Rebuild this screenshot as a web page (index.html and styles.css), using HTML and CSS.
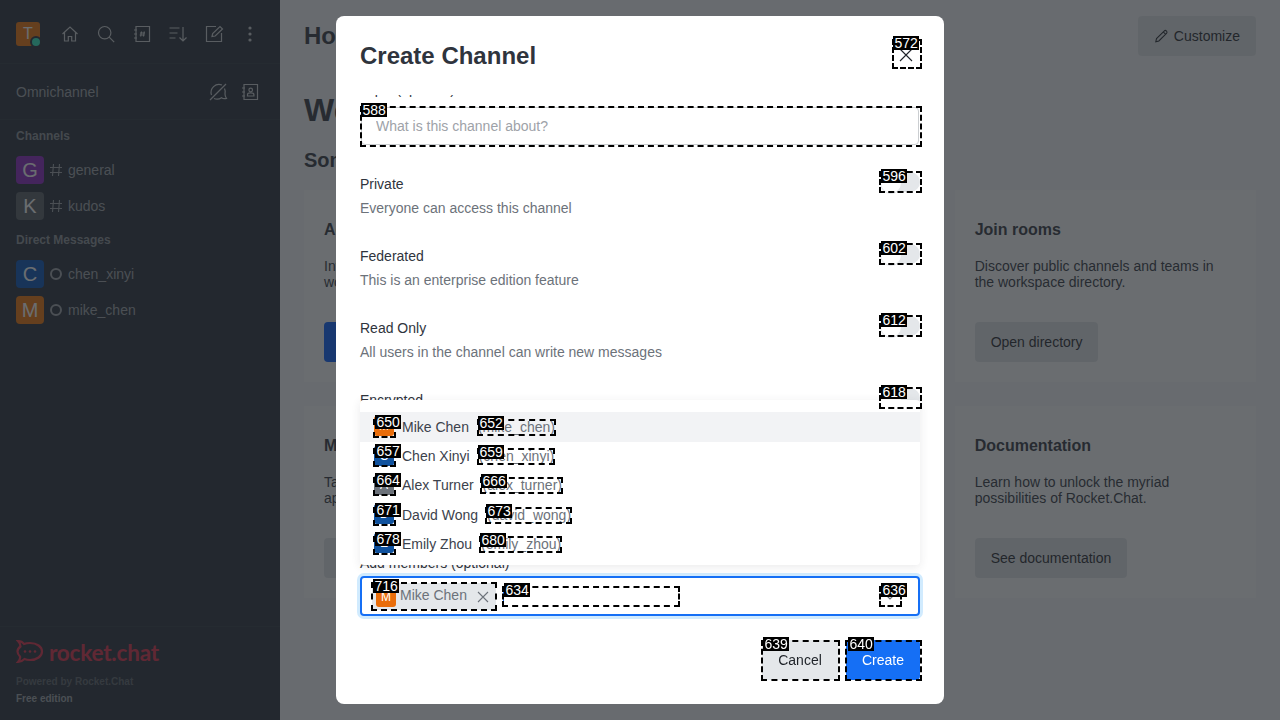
FILE: index.html
```html
<!DOCTYPE html>
<html lang="en">
<head>
    <meta charset="UTF-8">
    <meta name="viewport" content="width=device-width, initial-scale=1.0">
    <title>Create Channel</title>
    <link rel="stylesheet" href="styles.css">
</head>
<body>
    <div class="app">
        <aside class="sidebar">
            <div class="toolbar">
                <div class="user-avatar">T<span class="status-dot"></span></div>
                <svg class="icon" viewBox="0 0 20 20"><path d="M2.5 10 10 3l7.5 7M4.5 8.5V17h3.8v-4.5h3.4V17h3.8V8.5"/></svg>
                <svg class="icon" viewBox="0 0 20 20"><circle cx="8.7" cy="8.7" r="6.2"/><path d="m13.2 13.2 5 5"/></svg>
                <svg class="icon" viewBox="0 0 20 20"><path d="M4 2.5h13.500v15H4zM2 6h3M2 10h3M2 14h3M9.500 7.500 8.700 12.500M12.300 7.500l-.8 5M8 9h5M7.700 11h5"/></svg>
                <svg class="icon" viewBox="0 0 20 20"><path d="M1.500 4h10M1.500 9h8M1.500 14h6M15 3v14M11.500 13.500 15 17l3.500-3.500"/></svg>
                <svg class="icon" viewBox="0 0 20 20"><path d="M17.500 9v8.500h-15v-15H12M8 12.500l.7-3 7.300-7 2.500 2.500-7.300 7z"/></svg>
                <svg class="icon icon-fill" viewBox="0 0 20 20"><circle cx="10" cy="4" r="1.600"/><circle cx="10" cy="10" r="1.600"/><circle cx="10" cy="16" r="1.600"/></svg>
            </div>
            <div class="omni-row">
                <span class="omni-title">Omnichannel</span>
                <svg class="icon" viewBox="0 0 20 20"><path d="M2 18 18 2M3.500 13A8 8 0 0 1 14 3M16.500 6.500A8 8 0 0 1 17 12c0 2 .8 3.500 1.500 4.500-2.500.5-4 0-5-.8A8 8 0 0 1 6 16.500"/></svg>
                <svg class="icon" viewBox="0 0 20 20"><path d="M4 2.500h13.500v15H4zM2 6h3M2 10h3M2 14h3"/><circle cx="10.700" cy="8" r="1.800"/><path d="M7.500 14v-1.500c0-1 1-1.700 3.200-1.700s3.200.7 3.200 1.700V14z"/></svg>
            </div>
            <div class="room-list">
                <h4 class="group-title">Channels</h4>
                <div class="room">
                    <span class="avatar purple">G</span>
                    <svg class="room-icon" viewBox="0 0 14 14"><path d="M4.500 1 3.500 13M10.500 1l-1 12M1 4.500h12M1 9.500h12"/></svg>
                    <span class="room-name">general</span>
                </div>
                <div class="room">
                    <span class="avatar grey">K</span>
                    <svg class="room-icon" viewBox="0 0 14 14"><path d="M4.500 1 3.500 13M10.500 1l-1 12M1 4.500h12M1 9.500h12"/></svg>
                    <span class="room-name">kudos</span>
                </div>
                <h4 class="group-title">Direct Messages</h4>
                <div class="room">
                    <span class="avatar blue">C</span>
                    <span class="presence"></span>
                    <span class="room-name">chen_xinyi</span>
                </div>
                <div class="room">
                    <span class="avatar orange">M</span>
                    <span class="presence"></span>
                    <span class="room-name">mike_chen</span>
                </div>
            </div>
            <div class="side-footer">
                <div class="logo">
                    <svg class="logo-mark" viewBox="0 0 28 26"><path d="M2 2c3 0 5 1.500 6 3 2-.8 4-1 6-1 7 0 12 3.800 12 8.500S21 21 14 21c-2 0-4-.3-5.500-1-1.500 1.500-3.500 3-6.500 3 1.500-1.500 2.500-3.200 2-5.500C2.500 16 1.500 14.300 1.500 12.500S2.500 9 4.500 7.500C4.500 5.500 3.500 3.500 2 2z"/><circle cx="9" cy="12.500" r="1.300"/><circle cx="14" cy="12.500" r="1.300"/><circle cx="19" cy="12.500" r="1.300"/></svg>
                    <span class="logo-text">rocket.chat</span>
                </div>
                <p class="powered">Powered by Rocket.Chat</p>
                <p class="edition">Free edition</p>
            </div>
        </aside>

        <main class="main">
            <header class="main-header">
                <h2 class="main-title">Home</h2>
                <button class="btn btn-light">
                    <svg class="btn-icon" viewBox="0 0 16 16"><path d="M1.500 14.500l.8-3.500 8.700-8.700a1.900 1.900 0 0 1 2.700 2.700L5 13.700zM10 3.300 12.700 6"/></svg>
                    Customize
                </button>
            </header>
            <div class="main-body">
                <h1 class="welcome">Welcome to Rocket.Chat</h1>
                <h3 class="ideas">Some ideas to get you started</h3>
                <div class="cards">
                    <section class="card">
                        <h4>Add users</h4>
                        <p>Invite team members to your own online workspace.</p>
                        <button class="btn btn-primary">Add users</button>
                    </section>
                    <section class="card">
                        <h4>Create channels</h4>
                        <p>Create a channel to organize conversations by topic or team.</p>
                        <button class="btn btn-light">Create channel</button>
                    </section>
                    <section class="card">
                        <h4>Join rooms</h4>
                        <p>Discover public channels and teams in the workspace directory.</p>
                        <button class="btn btn-light">Open directory</button>
                    </section>
                    <section class="card">
                        <h4>Mobile apps</h4>
                        <p>Take Rocket.Chat with you with mobile applications.</p>
                        <button class="btn btn-light">Google Play</button>
                    </section>
                    <section class="card">
                        <h4>Desktop apps</h4>
                        <p>Install Rocket.Chat on your Windows, Linux or Mac computer.</p>
                        <button class="btn btn-light">Windows</button>
                    </section>
                    <section class="card">
                        <h4>Documentation</h4>
                        <p>Learn how to unlock the myriad possibilities of Rocket.Chat.</p>
                        <button class="btn btn-light">See documentation</button>
                    </section>
                </div>
            </div>
        </main>
    </div>

    <div class="backdrop"></div>

    <div class="modal">
        <header class="modal-header">
            <h2>Create Channel</h2>
            <svg class="close-icon" viewBox="0 0 16 16"><path d="M2 2l12 12M14 2 2 14"/></svg>
        </header>
        <div class="modal-body">
            <form class="form">
                <label class="field-label">Topic (optional)</label>
                <input class="text-input" type="text" placeholder="What is this channel about?">

                <div class="toggle-row">
                    <div>
                        <div class="toggle-name">Private</div>
                        <div class="toggle-hint">Everyone can access this channel</div>
                    </div>
                    <span class="toggle"></span>
                </div>
                <div class="toggle-row">
                    <div>
                        <div class="toggle-name">Federated</div>
                        <div class="toggle-hint">This is an enterprise edition feature</div>
                    </div>
                    <span class="toggle"></span>
                </div>
                <div class="toggle-row">
                    <div>
                        <div class="toggle-name">Read Only</div>
                        <div class="toggle-hint">All users in the channel can write new messages</div>
                    </div>
                    <span class="toggle"></span>
                </div>
                <div class="toggle-row">
                    <div>
                        <div class="toggle-name">Encrypted</div>
                        <div class="toggle-hint">End to end encrypted channel</div>
                    </div>
                    <span class="toggle"></span>
                </div>
                <div class="toggle-row">
                    <div>
                        <div class="toggle-name">Broadcast</div>
                        <div class="toggle-hint">Only authorized users can write</div>
                    </div>
                    <span class="toggle"></span>
                </div>

                <label class="field-label members-label">Add members (optional)</label>
                <div class="member-input">
                    <span class="chip">
                        <span class="mini-avatar orange-bright">M</span>
                        <span class="chip-name">Mike Chen</span>
                        <svg class="chip-close" viewBox="0 0 12 12"><path d="M1 1l10 10M11 1 1 11"/></svg>
                    </span>
                    <span class="caret"></span>
                    <svg class="chevron" viewBox="0 0 16 16"><path d="M3 6l5 5 5-5"/></svg>
                </div>
            </form>
        </div>
        <footer class="modal-footer">
            <button class="btn btn-cancel">Cancel</button>
            <button class="btn btn-create">Create</button>
        </footer>

        <ul class="options">
            <li class="option option-active"><span class="mini-avatar orange-bright">M</span><span class="option-name">Mike Chen</span><span class="option-user">(mike_chen)</span></li>
            <li class="option"><span class="mini-avatar blue-bright">C</span><span class="option-name">Chen Xinyi</span><span class="option-user">(chen_xinyi)</span></li>
            <li class="option"><span class="mini-avatar grey-bright">A</span><span class="option-name">Alex Turner</span><span class="option-user">(alex_turner)</span></li>
            <li class="option"><span class="mini-avatar blue-bright">D</span><span class="option-name">David Wong</span><span class="option-user">(david_wong)</span></li>
            <li class="option"><span class="mini-avatar blue-bright">E</span><span class="option-name">Emily Zhou</span><span class="option-user">(emily_zhou)</span></li>
        </ul>
    </div>

    <!-- numbered element markers drawn over the page -->
    <div class="marks">
        <div class="mark m572"><span>572</span></div>
        <div class="mark m588"><span>588</span></div>
        <div class="mark mark-toggle m596"><span>596</span></div>
        <div class="mark mark-toggle m602"><span>602</span></div>
        <div class="mark mark-toggle m612"><span>612</span></div>
        <div class="mark mark-toggle m618"><span>618</span></div>
        <div class="mark mark-avatar m650"><span>650</span></div>
        <div class="mark mark-user m652"><span>652</span></div>
        <div class="mark mark-avatar m657"><span>657</span></div>
        <div class="mark mark-user m659"><span>659</span></div>
        <div class="mark mark-avatar m664"><span>664</span></div>
        <div class="mark mark-user m666"><span>666</span></div>
        <div class="mark mark-avatar m671"><span>671</span></div>
        <div class="mark mark-user m673"><span>673</span></div>
        <div class="mark mark-avatar m678"><span>678</span></div>
        <div class="mark mark-user m680"><span>680</span></div>
        <div class="mark m716"><span>716</span></div>
        <div class="mark m634"><span>634</span></div>
        <div class="mark m636"><span>636</span></div>
        <div class="mark m639"><span>639</span></div>
        <div class="mark m640"><span>640</span></div>
    </div>
</body>
</html>
```

FILE: styles.css
```css
* {
    box-sizing: border-box;
}

html, body {
    height: 100%;
}

body {
    margin: 0;
    font-family: "Liberation Sans", Arial, sans-serif;
    font-size: 14px;
    color: #2f343d;
    overflow: hidden;
}

h1, h2, h3, h4, p, ul {
    margin: 0;
    padding: 0;
}

.app {
    display: flex;
    height: 720px;
}

/* Sidebar */
.sidebar {
    width: 280px;
    flex-shrink: 0;
    display: flex;
    flex-direction: column;
    background-color: #232a35;
    color: #9ea2a8;
}

.toolbar {
    height: 64px;
    padding: 5px 16px 0;
    display: flex;
    align-items: center;
    border-bottom: 1px solid #2b323d;
}

.icon {
    width: 20px;
    height: 20px;
    fill: none;
    stroke: #cbced1;
    stroke-width: 1.2;
    margin-left: 16px;
}

.toolbar .user-avatar + .icon {
    margin-left: 20px;
}

.icon-fill {
    fill: #cbced1;
    stroke: none;
}

.user-avatar {
    position: relative;
    width: 24px;
    height: 24px;
    border-radius: 3px;
    background-color: #f07000;
    color: #fff;
    font-size: 16px;
    line-height: 24px;
    text-align: center;
}

.status-dot {
    position: absolute;
    right: -2px;
    bottom: -2px;
    width: 12px;
    height: 12px;
    border-radius: 50%;
    background-color: #29f0c0;
    border: 2px solid #232a35;
}

.omni-row {
    height: 56px;
    padding: 0 20px 0 16px;
    display: flex;
    align-items: center;
    border-bottom: 1px solid #2b323d;
}

.omni-title {
    flex: 1;
    color: #9ea2a8;
}

.omni-row .icon {
    margin-left: 12px;
}

.room-list {
    flex: 1;
    padding-top: 8px;
}

.group-title {
    height: 16px;
    margin: 0 16px 8px;
    line-height: 16px;
    font-size: 12px;
    font-weight: bold;
    color: #8a8f96;
}

.room {
    height: 36px;
    padding: 0 16px;
    display: flex;
    align-items: center;
}

.room + .group-title {
    margin-top: 8px;
}

.avatar {
    width: 28px;
    height: 28px;
    border-radius: 4px;
    color: #fff;
    font-size: 20px;
    line-height: 28px;
    text-align: center;
}

.purple { background-color: #8a20c0; }
.grey { background-color: #555a62; }
.blue { background-color: #004fb8; }
.orange { background-color: #f07000; }

.room-icon {
    width: 14px;
    height: 14px;
    margin-left: 5px;
    fill: none;
    stroke: #9ea2a8;
    stroke-width: 1.1;
}

.presence {
    width: 12px;
    height: 12px;
    margin-left: 6px;
    margin-right: 1px;
    border: 2px solid #9ea2a8;
    border-radius: 50%;
}

.room-name {
    margin-left: 5px;
    color: #9ea2a8;
}

.side-footer {
    height: 94px;
    padding: 13px 16px 0;
    border-top: 1px solid #2b323d;
}

.logo {
    height: 24px;
    display: flex;
    align-items: center;
}

.logo-mark {
    width: 28px;
    height: 26px;
    fill: none;
    stroke: #e02a45;
    stroke-width: 2.2;
}

.logo-mark circle {
    fill: #e02a45;
    stroke: none;
}

.logo-text {
    margin-left: 5px;
    font-family: Lato, sans-serif;
    font-size: 22.5px;
    font-weight: 700;
    letter-spacing: -0.2px;
    color: #e02a45;
}

.powered, .edition {
    font-size: 10px;
    font-weight: bold;
    line-height: 17px;
}

.powered {
    margin-top: 9px;
    color: #5c6168;
}

.edition {
    color: #9ea2a8;
}

/* Home page behind the dialog */
.main {
    flex: 1;
    background-color: #f7f8fa;
    padding: 0 24px;
}

.main-header {
    height: 72px;
    display: flex;
    align-items: center;
    justify-content: space-between;
}

.main-title {
    font-size: 24px;
    color: #2f343d;
}

.welcome {
    margin-top: 20px;
    font-size: 32px;
    line-height: 36px;
    color: #2f343d;
}

.ideas {
    margin-top: 18px;
    font-size: 20px;
    line-height: 28px;
}

.cards {
    margin-top: 16px;
    display: grid;
    grid-template-columns: repeat(3, 1fr);
    gap: 24px;
}

.card {
    height: 192px;
    padding: 28px 20px 20px;
    background-color: #fff;
}

.card h4 {
    font-size: 16px;
    line-height: 24px;
}

.card p {
    height: 32px;
    margin: 16px 0 32px;
    line-height: 16px;
}

.btn {
    height: 40px;
    padding: 0 16px;
    border: none;
    border-radius: 4px;
    font-family: inherit;
    font-size: 14px;
    display: inline-flex;
    align-items: center;
}

.btn-light {
    background-color: #e4e7ea;
    color: #1f2329;
}

.btn-primary {
    background-color: #005bff;
    color: #fff;
}

.btn-icon {
    width: 15px;
    height: 14px;
    margin-right: 5px;
    fill: none;
    stroke: #1f2329;
    stroke-width: 1.2;
}

/* Dim layer */
.backdrop {
    position: fixed;
    top: 0;
    left: 0;
    width: 100%;
    height: 100%;
    background-color: rgba(36, 40, 44, 0.68);
}

/* Dialog */
.modal {
    position: fixed;
    left: 336px;
    top: 16px;
    width: 608px;
    height: 688px;
    display: flex;
    flex-direction: column;
    background-color: #fff;
    border-radius: 8px;
}

.modal-header {
    height: 79px;
    padding: 1px 24px 0;
    display: flex;
    align-items: center;
    justify-content: space-between;
}

.modal-header h2 {
    font-size: 24px;
    color: #2f343d;
}

.close-icon {
    width: 16px;
    height: 16px;
    margin-right: 6px;
    margin-top: -2px;
    fill: none;
    stroke: #1f2329;
    stroke-width: 1.1;
}

.modal-body {
    flex: 1;
    overflow: hidden;
    padding: 0 24px;
}

.form {
    margin-top: -16px;
}

.field-label {
    display: block;
    height: 20px;
    line-height: 20px;
    margin-bottom: 8px;
}

.text-input {
    display: block;
    width: 558px;
    height: 38px;
    margin-left: 1px;
    padding: 0 14px;
    border: 1px solid #cbced1;
    border-radius: 4px;
    font-family: inherit;
    font-size: 14px;
    outline: none;
}

.text-input::placeholder {
    color: #9ea2a8;
}

.toggle-row {
    height: 72px;
    display: flex;
    justify-content: space-between;
    align-items: flex-start;
}

.text-input + .toggle-row {
    margin-top: 27px;
}

.toggle-name {
    height: 24px;
    line-height: 24px;
}

.toggle-hint {
    color: #6c727a;
    line-height: 24px;
}

.toggle {
    position: relative;
    width: 40px;
    height: 20px;
    border-radius: 10px;
    background-color: #e4e7ea;
}

.toggle::before {
    content: "";
    position: absolute;
    left: 0;
    top: 0;
    width: 20px;
    height: 20px;
    border-radius: 50%;
    background-color: #fff;
    border: 1px solid #e4e7ea;
}

.members-label {
    margin-top: 21px;
    margin-bottom: 3px;
}

.member-input {
    height: 40px;
    padding: 0 20px 0 12px;
    display: flex;
    align-items: center;
    border: 2px solid #156ff5;
    border-radius: 4px;
    box-shadow: 0 0 0 3px #d1ebfe;
}

.chip {
    height: 27px;
    width: 124px;
    margin: 1px 0 0 -2px;
    padding: 0 0 0 4px;
    display: flex;
    align-items: center;
    background-color: #e4e7ea;
    border-radius: 2px;
    flex-shrink: 0;
}

.mini-avatar {
    width: 20px;
    height: 20px;
    border-radius: 3px;
    color: #fff;
    font-size: 12px;
    line-height: 20px;
    text-align: center;
    flex-shrink: 0;
}

.orange-bright { background-color: #e96d0a; }
.blue-bright { background-color: #10529e; }
.grey-bright { background-color: #6c727a; }

.chip-name {
    margin: 0 0 3px 4px;
    color: #6c727a;
}

.chip-close {
    width: 12px;
    height: 12px;
    margin-left: 10px;
    fill: none;
    stroke: #6c727a;
    stroke-width: 1.1;
}

.caret {
    width: 1px;
    height: 20px;
    margin-left: 7px;
    background-color: #156ff5;
    flex: none;
}

.chevron {
    width: 16px;
    height: 16px;
    margin-left: auto;
    fill: none;
    stroke: #6c727a;
    stroke-width: 1.2;
}

.modal-footer {
    height: 84px;
    padding: 0 24px 24px;
    display: flex;
    justify-content: flex-end;
    align-items: flex-end;
    gap: 8px;
}

.btn-cancel {
    width: 76px;
    justify-content: center;
    background-color: #e4e7ea;
    color: #1f2329;
}

.btn-create {
    width: 74px;
    justify-content: center;
    background-color: #156ff5;
    color: #fff;
}

/* Member picker dropdown */
.options {
    position: absolute;
    left: 24px;
    top: 384px;
    width: 560px;
    height: 165px;
    padding: 12.25px 0 0;
    list-style: none;
    background-color: #fff;
    border-radius: 4px;
    box-shadow: 0 2px 10px rgba(47, 52, 61, 0.1);
}

.option {
    height: 29.25px;
    padding: 0 16px;
    display: flex;
    align-items: center;
}

.option-active {
    background-color: #f2f3f5;
}

.option .mini-avatar {
    margin: -1px 0 0 -2px;
}

.option-name {
    margin-left: 8px;
    color: #3c424c;
}

.option-user {
    margin-left: 9px;
    color: #6c727a;
}

/* Markers */
.marks {
    position: fixed;
    top: 0;
    left: 0;
}

.mark {
    position: absolute;
    border: 2px dashed #000;
}

.mark span {
    position: absolute;
    left: 0;
    top: -5px;
    padding: 0 1.5px;
    background-color: #000;
    color: #fff;
    font-size: 14px;
    line-height: 14px;
}

.mark-toggle span {
    top: -4px;
}

.mark-avatar span {
    top: -6px;
}

.mark-user span,
.m572 span,
.m588 span {
    left: -1px;
}

.m640 span {
    left: 1px;
}

.m572 { left: 892px; top: 39px; width: 30px; height: 30px; }
.m588 { left: 360px; top: 106px; width: 562px; height: 41px; }
.m596 { left: 879px; top: 171px; width: 43px; height: 22px; }
.m602 { left: 879px; top: 243px; width: 43px; height: 22px; }
.m612 { left: 879px; top: 315px; width: 43px; height: 22px; }
.m618 { left: 879px; top: 387px; width: 43px; height: 22px; }
.m650 { left: 373px; top: 419px; width: 23px; height: 19px; }
.m652 { left: 477px; top: 419px; width: 79px; height: 17px; }
.m657 { left: 373px; top: 448px; width: 23px; height: 19px; }
.m659 { left: 477px; top: 448px; width: 78px; height: 17px; }
.m664 { left: 373px; top: 477px; width: 23px; height: 19px; }
.m666 { left: 480px; top: 477px; width: 83px; height: 17px; }
.m671 { left: 373px; top: 507px; width: 23px; height: 19px; }
.m673 { left: 485px; top: 507px; width: 87px; height: 17px; }
.m678 { left: 373px; top: 536px; width: 23px; height: 19px; }
.m680 { left: 479px; top: 536px; width: 83px; height: 17px; }
.m716 { left: 371px; top: 582px; width: 126px; height: 29px; }
.m634 { left: 502px; top: 586px; width: 178px; height: 21px; }
.m636 { left: 879px; top: 586px; width: 23px; height: 21px; }
.m639 { left: 761px; top: 640px; width: 79px; height: 41px; }
.m640 { left: 845px; top: 640px; width: 77px; height: 41px; }
```
